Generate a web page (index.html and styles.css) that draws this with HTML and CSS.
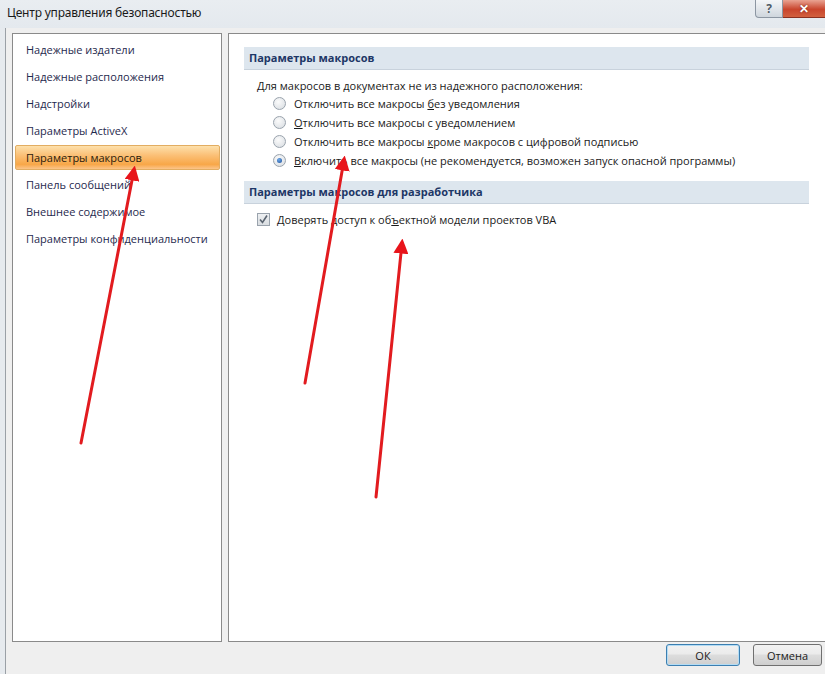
FILE: index.html
```html
<!DOCTYPE html>
<html lang="ru">
<head>
  <meta charset="UTF-8">
  <title>Центр управления безопасностью</title>
  <link rel="stylesheet" href="styles.css">
</head>
<body>
  <div class="frame">
    <div class="titlebar">
      <span class="title">Центр управления безопасностью</span>
      <div class="caption-buttons">
        <span class="btn-help">?</span>
        <span class="btn-close">✕</span>
      </div>
    </div>

    <div class="client">
      <div class="panes">
        <ul class="nav">
          <li>Надежные издатели</li>
          <li>Надежные расположения</li>
          <li>Надстройки</li>
          <li>Параметры ActiveX</li>
          <li class="active">Параметры макросов</li>
          <li>Панель сообщений</li>
          <li>Внешнее содержимое</li>
          <li>Параметры конфиденциальности</li>
        </ul>

        <div class="content">
          <div class="section-head">Параметры макросов</div>
          <p class="lead">Для макросов в документах не из надежного расположения:</p>
          <div class="options">
            <label class="option"><span class="radio"></span><span>Отключить все макросы <u>б</u>ез уведомления</span></label>
            <label class="option"><span class="radio"></span><span><u>О</u>тключить все макросы с уведомлением</span></label>
            <label class="option"><span class="radio"></span><span>Отключить все макросы <u>к</u>роме макросов с цифровой подписью</span></label>
            <label class="option"><span class="radio checked"></span><span><u>В</u>ключить все макросы (не рекомендуется, возможен запуск опасной программы)</span></label>
          </div>

          <div class="section-head">Параметры макросов для разработчика</div>
          <label class="check-row">
            <span class="checkbox">
              <svg width="11" height="11" viewBox="0 0 11 11"><path d="M2 5.5 L4.5 8.5 L9 1.5" fill="none" stroke="#5a6470" stroke-width="1.6"/></svg>
            </span>
            <span>Доверять доступ к об<u>ъ</u>ектной модели проектов VBA</span>
          </label>
        </div>
      </div>

      <div class="footer">
        <button class="dlg-btn default">ОК</button>
        <button class="dlg-btn">Отмена</button>
      </div>
    </div>
  </div>

  <svg class="arrows" width="825" height="674" viewBox="0 0 825 674">
    <defs>
      <marker id="head" viewBox="0 0 10 10" refX="7" refY="5" markerWidth="5" markerHeight="5" orient="auto">
        <path d="M0 0 L10 5 L0 10 Z" fill="#e8141b"/>
      </marker>
    </defs>
    <line x1="81" y1="443" x2="134" y2="170" marker-end="url(#head)"/>
    <line x1="305" y1="383" x2="344" y2="160" marker-end="url(#head)"/>
    <line x1="376" y1="497" x2="402" y2="243" marker-end="url(#head)"/>
  </svg>
</body>
</html>
```

FILE: styles.css
```css
body {
  margin: 0;
  width: 825px;
  height: 674px;
  overflow: hidden;
  background: #e6eaee;
  font-family: 'Open Sans', 'Noto Sans', sans-serif;
  position: relative;
}
.frame {
  height: 674px;
  display: flex;
  flex-direction: column;
}
.titlebar {
  height: 28px;
  display: flex;
  justify-content: space-between;
  align-items: flex-start;
  background: linear-gradient(#e9edf1, #e4e9ee);
}
.title {
  font-family: 'Noto Sans', sans-serif;
  font-size: 12px;
  letter-spacing: -0.2px;
  color: #1a1a1a;
  padding: 4px 0 0 7px;
}
.caption-buttons {
  display: flex;
}
.caption-buttons span {
  height: 17px;
  display: flex;
  align-items: center;
  justify-content: center;
  font-size: 12px;
  font-weight: bold;
  color: #fff;
}
.btn-help {
  width: 26px;
  background: linear-gradient(#f4f6f8, #cfd6dd);
  border: 1px solid #8c96a2;
  border-top: none;
  border-radius: 0 0 0 4px;
  color: #4e5a66 !important;
  text-shadow: 0 0 1px #fff;
}
.btn-close {
  width: 42px;
  background: linear-gradient(#e9a392, #c9452d 55%, #d2603f);
  border-bottom: 1px solid #8a3020;
  text-shadow: 0 0 2px #6a1a10;
}
.client {
  flex: 1;
  margin-left: 5px;
  border-left: 1px solid #9aa0a6;
  background: #efefef;
  display: flex;
  flex-direction: column;
  padding: 5px 0 0 6px;
}
.panes {
  display: flex;
  gap: 6px;
  height: 609px;
}
.nav {
  list-style: none;
  margin: 0;
  padding: 3px 1px 0 2px;
  width: 205px;
  background: #fff;
  border: 1px solid #8a8a8a;
  font-size: 11px;
  color: #1f2a4e;
}
.nav li {
  height: 23px;
  line-height: 23px;
  margin-bottom: 2px;
  padding-left: 10px;
  border: 1px solid transparent;
}
.nav li.active {
  background: linear-gradient(#fde0ab, #fbc077 40%, #f8a748 80%, #fcc58a);
  border-color: #e2ad62;
  border-radius: 2px;
  color: #2b1b0c;
}
.content {
  flex: 1;
  background: #fff;
  border: 1px solid #8a8a8a;
  border-right: none;
  padding: 13px 16px 0 15px;
  font-size: 11px;
  color: #1a1a1a;
}
.section-head {
  height: 22px;
  line-height: 22px;
  padding-left: 5px;
  background: #dde6ee;
  border-bottom: 1px solid #c8d2dc;
  font-weight: bold;
  color: #1d3766;
}
.lead {
  margin: 8px 0 0 13px;
  line-height: 16px;
}
.options {
  display: flex;
  flex-direction: column;
  margin: 0 0 11px 29px;
}
.option {
  display: flex;
  align-items: center;
  height: 19px;
}
.radio {
  width: 11px;
  height: 11px;
  border-radius: 50%;
  border: 1px solid #9aa3ad;
  background: radial-gradient(circle at 40% 35%, #fbfbfb, #d6dbe0);
  margin-right: 8px;
  position: relative;
}
.radio.checked::after {
  content: "";
  position: absolute;
  left: 3px;
  top: 3px;
  width: 5px;
  height: 5px;
  border-radius: 50%;
  background: radial-gradient(circle at 40% 35%, #6ea9e8, #1d4f9a);
}
.check-row {
  display: flex;
  align-items: center;
  margin: 7px 0 0 13px;
  height: 16px;
}
.checkbox {
  width: 11px;
  height: 11px;
  border: 1px solid #9aa3ad;
  background: linear-gradient(#eef0f2, #d9dde1);
  margin-right: 7px;
  display: flex;
}
.footer {
  display: flex;
  justify-content: flex-end;
  gap: 13px;
  padding: 2px 3px 0 0;
}
.dlg-btn {
  font-family: 'Open Sans', 'Noto Sans', sans-serif;
  font-size: 11px;
  height: 22px;
  border-radius: 3px;
  border: 1px solid #707070;
  background: linear-gradient(#f2f2f2, #ebebeb 45%, #dddddd 50%, #cfcfcf);
  color: #1a1a1a;
  padding: 0;
}
.dlg-btn.default {
  width: 74px;
  border-color: #3c7fb1;
  box-shadow: inset 0 0 0 1px #b4dcf4;
}
.dlg-btn:not(.default) {
  width: 69px;
}
.arrows {
  position: absolute;
  left: 0;
  top: 0;
  pointer-events: none;
}
.arrows line {
  stroke: #e21b1f;
  stroke-width: 3;
  stroke-linecap: round;
}
```
